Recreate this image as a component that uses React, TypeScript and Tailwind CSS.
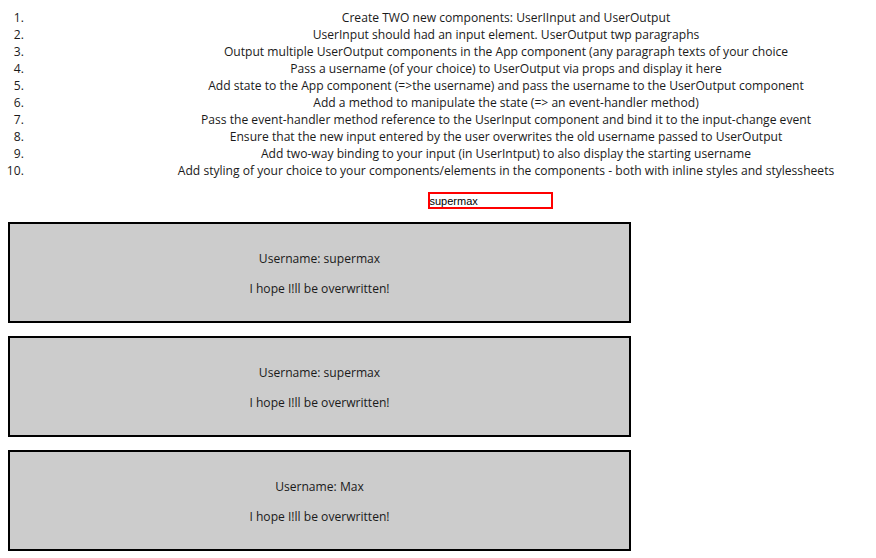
import React, { useState } from 'react'

const tasks = [
  'Create TWO new components: UserIInput and UserOutput',
  'UserInput should had an input element. UserOutput twp paragraphs',
  'Output multiple UserOutput components in the App component (any paragraph texts of your choice',
  'Pass a username (of your choice) to UserOutput via props and display it here',
  'Add state to the App component (=>the username) and pass the username to the UserOutput component',
  'Add a method to manipulate the state (=> an event-handler method)',
  'Pass the event-handler method reference to the UserInput component and bind it to the input-change event',
  'Ensure that the new input entered by the user overwrites the old username passed to UserOutput',
  'Add two-way binding to your input (in UserIntput) to also display the starting username',
  'Add styling of your choice to your components/elements in the components - both with inline styles and stylessheets',
]

function UserInput({ value, onChange }: { value: string; onChange: (e: React.ChangeEvent<HTMLInputElement>) => void }) {
  return (
    <div className="w-[964px] text-center">
      <input
        type="text"
        value={value}
        onChange={onChange}
        className="w-[125px] h-[17px] border-2 border-[#ff0000] p-0 text-[11px] leading-[13px] text-black outline-none align-top"
        style={{ fontFamily: '"Liberation Sans", Arial, sans-serif' }}
      />
    </div>
  )
}

function UserOutput({ username }: { username: string }) {
  return (
    <div className="w-[623px] border-2 border-black bg-[#cccccc] pt-[13px] pb-[11px] text-center">
      <p className="my-[13px]">Username: {username}</p>
      <p className="my-[13px]">I hope I!ll be overwritten!</p>
    </div>
  )
}

export default function App() {
  const [username, setUsername] = useState('supermax')

  return (
    <div
      className="w-[876px] h-[558px] overflow-hidden bg-white text-[12.1px] leading-[17px] text-[#1a1a1a]"
      style={{ fontFamily: '"Open Sans", "Noto Sans", sans-serif' }}
    >
      <div className="pl-[8px] pt-[9px]">
        <ol className="list-decimal list-outside w-[977px] pl-[19px] text-center">
          {tasks.map((t) => (
            <li key={t}>{t}</li>
          ))}
        </ol>
        <div className="mt-[13px]">
          <UserInput value={username} onChange={(e) => setUsername(e.target.value)} />
        </div>
        <div className="mt-[13px] flex flex-col gap-[13px]">
          <UserOutput username={username} />
          <UserOutput username={username} />
          <UserOutput username="Max" />
        </div>
      </div>
    </div>
  )
}
